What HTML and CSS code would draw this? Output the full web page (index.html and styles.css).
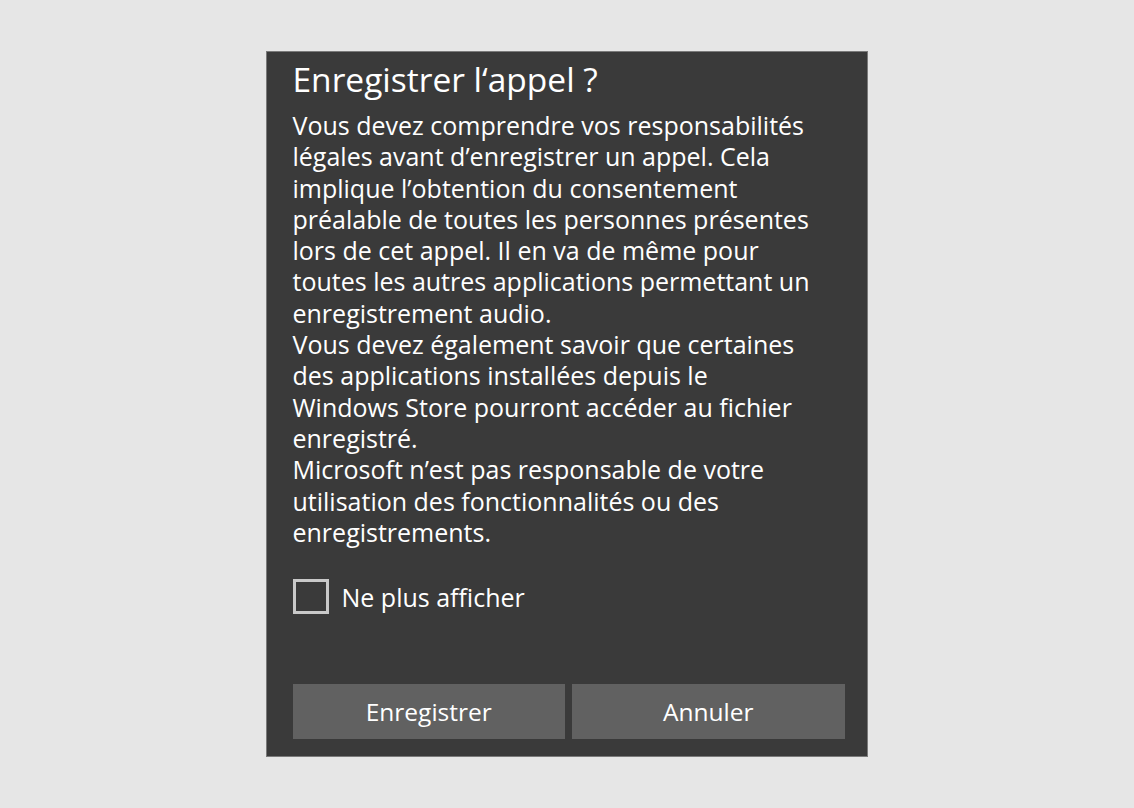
FILE: index.html
```html
<!DOCTYPE html>
<html lang="fr">
<head>
<meta charset="utf-8">
<title>Enregistrer l'appel ?</title>
<link rel="stylesheet" href="styles.css">
</head>
<body>
<div class="stage">
  <div class="dialog">
    <h1 class="title">Enregistrer l‘appel ?</h1>
    <div class="body">
      <p class="para">Vous devez comprendre vos responsabilités<br>légales avant d’enregistrer un appel. Cela<br>implique l’obtention du consentement<br>préalable de toutes les personnes présentes<br>lors de cet appel. Il en va de même pour<br>toutes les autres applications permettant un<br>enregistrement audio.</p>
      <p class="para">Vous devez également savoir que certaines<br>des applications installées depuis le<br>Windows Store pourront accéder au fichier<br>enregistré.</p>
      <p class="para">Microsoft n’est pas responsable de votre<br>utilisation des fonctionnalités ou des<br>enregistrements.</p>
    </div>
    <label class="check">
      <span class="box"></span>
      <span class="check-label">Ne plus afficher</span>
    </label>
    <div class="actions">
      <button class="btn">Enregistrer</button>
      <button class="btn">Annuler</button>
    </div>
  </div>
</div>
</body>
</html>
```
FILE: styles.css
```css
html, body {
  margin: 0;
  padding: 0;
  background: #e6e6e6;
}
body {
  font-family: "Open Sans", "Noto Sans", sans-serif;
  color: #ffffff;
}
.stage {
  width: 1134px;
  height: 808px;
  padding-top: 51px;
  box-sizing: border-box;
  display: flex;
  justify-content: center;
}
.dialog {
  width: 602px;
  height: 706px;
  box-sizing: border-box;
  background: #3a3a3a;
  border: 1px solid #7a7a7a;
  display: flex;
  flex-direction: column;
  padding: 7px 22px 17px 26px;
  margin-left: -1px;
}
.title {
  margin: 0;
  font-weight: 400;
  font-size: 33.5px;
  line-height: 40px;
  white-space: nowrap;
}
.body {
  margin-top: 11px;
}
.para {
  margin: 0;
  font-size: 25px;
  line-height: 31.3px;
  white-space: nowrap;
}
.check {
  display: flex;
  align-items: center;
  margin-top: 31px;
  gap: 13px;
}
.box {
  width: 36px;
  height: 35px;
  box-sizing: border-box;
  border: 3px solid #c9c9c9;
}
.check-label {
  font-size: 25px;
  line-height: 34px;
}
.actions {
  margin-top: auto;
  display: flex;
  gap: 7px;
}
.btn {
  flex: 1;
  height: 55px;
  border: 0;
  background: #616161;
  color: #ffffff;
  font-family: "Open Sans", "Noto Sans", sans-serif;
  font-size: 24.5px;
  padding: 0;
}
```
